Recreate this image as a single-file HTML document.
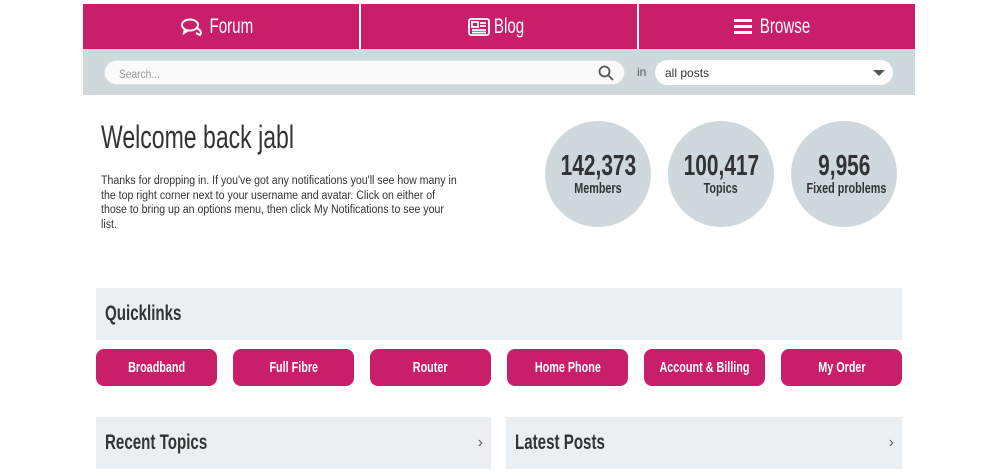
<!DOCTYPE html>
<html><head><style>
*{margin:0;padding:0;box-sizing:border-box}
body{width:998px;height:475px;background:#fff;font-family:"Liberation Sans",sans-serif;position:relative;overflow:hidden}
.s{display:inline-block;transform:scaleX(0.72);white-space:nowrap}
.sl{transform-origin:left center}
.nav{position:absolute;left:83px;top:4px;width:832px;height:45px;background:#c91f6b;display:flex}
.nav div{flex:1;display:flex;align-items:center;justify-content:center;color:#fff;font-size:21px;gap:0}
.nav div+div{border-left:2px solid #fff}
.sb{position:absolute;left:83px;top:49px;width:832px;height:46px;background:#cfd8dc}
.inp{position:absolute;left:21px;top:11px;width:521px;height:25px;background:#fafafa;border-radius:13px;border:1px solid #e0e0e0;font-size:12px;color:#999;padding:6px 14px}
.sel{position:absolute;left:572px;top:11px;width:238px;height:25px;background:#fff;border-radius:13px;font-size:12px;color:#333;padding:6px 10px}
h1{position:absolute;left:101px;top:119px;font-size:32px;font-weight:normal;color:#333}
p.t{position:absolute;left:101px;top:174px;width:392px;font-size:11.5px;line-height:14.5px;color:#333;transform:scaleX(.92);transform-origin:left top}
.c{position:absolute;top:121px;width:106px;height:106px;border-radius:50%;background:#cfd8dc;color:#333;text-align:center;font-weight:bold}
.c b{display:block;font-size:29px;margin-top:28px;line-height:34px}
.c .l{display:block;font-size:15px;margin-top:-3px}
.box{position:absolute;background:#eceff1;color:#333;font-weight:bold;font-size:21px;padding:14px 9px}
.btn{position:absolute;top:349px;width:121px;height:37px;background:#c91f6b;border-radius:8px;color:#fff;font-weight:bold;font-size:15px;display:flex;align-items:center;justify-content:center}
.ar{position:absolute;right:8px;top:17px;font-size:16px;color:#666;font-weight:normal}
</style></head><body>
<div class="nav">
<div><svg width="22" height="18" viewBox="0 0 22 18" fill="none" stroke="#fff" stroke-width="2"><ellipse cx="9" cy="7" rx="8" ry="5.5"/><path d="M4 11l-1 4 5-3M15 10c3 1 5 3 5 5l-1 2-4-2"/></svg><span class="s" style="margin-left:-2px">Forum</span></div>
<div><svg width="22" height="18" viewBox="0 0 22 18" fill="none" stroke="#fff" stroke-width="1.8"><rect x="1" y="1" width="20" height="16" rx="2"/><rect x="4" y="4" width="6" height="5"/><path d="M12 5h6M12 8h6M4 12h14M4 14.5h14"/></svg><span class="s" style="margin-left:-2px">Blog</span></div>
<div><svg width="18" height="15" viewBox="0 0 18 15" fill="#fff"><rect y="0" width="18" height="3"/><rect y="6" width="18" height="3"/><rect y="12" width="18" height="3"/></svg><span class="s" style="margin-left:-2px">Browse</span></div>
</div>
<div class="sb">
<div class="inp"><span class="s sl" style="transform:scaleX(.85)">Search...</span><svg style="position:absolute;right:10px;top:4px" width="16" height="16" viewBox="0 0 16 16" fill="none" stroke="#555" stroke-width="1.8"><circle cx="6.5" cy="6.5" r="5"/><path d="M10 10l5 5"/></svg></div>
<div style="position:absolute;left:554px;top:16px;font-size:12px;color:#555">in</div>
<div class="sel">all posts<svg style="position:absolute;right:8px;top:10px" width="12" height="6"><path d="M0 0h12L6 6z" fill="#555"/></svg></div>
</div>
<h1><span class="s sl">Welcome back jabl</span></h1>
<p class="t">Thanks for dropping in. If you've got any notifications you'll see how many in the top right corner next to your username and avatar. Click on either of those to bring up an options menu, then click My Notifications to see your list.</p>
<div class="c" style="left:545px"><b><span class="s">142,373</span></b><div class="l"><span class="s">Members</span></div></div>
<div class="c" style="left:668px"><b><span class="s">100,417</span></b><div class="l"><span class="s">Topics</span></div></div>
<div class="c" style="left:791px"><b><span class="s">9,956</span></b><div class="l"><span class="s">Fixed problems</span></div></div>
<div class="box" style="left:96px;top:288px;width:806px;height:52px"><span class="s sl">Quicklinks</span></div>
<div class="btn" style="left:96px"><span class="s">Broadband</span></div>
<div class="btn" style="left:233px"><span class="s">Full Fibre</span></div>
<div class="btn" style="left:370px"><span class="s">Router</span></div>
<div class="btn" style="left:507px"><span class="s">Home Phone</span></div>
<div class="btn" style="left:644px"><span class="s">Account &amp; Billing</span></div>
<div class="btn" style="left:781px"><span class="s">My Order</span></div>
<div class="box" style="left:96px;top:417px;width:395px;height:52px"><span class="s sl">Recent Topics</span><span class="ar">&#8250;</span></div>
<div class="box" style="left:506px;top:417px;width:396px;height:52px"><span class="s sl">Latest Posts</span><span class="ar">&#8250;</span></div>
</body></html>
